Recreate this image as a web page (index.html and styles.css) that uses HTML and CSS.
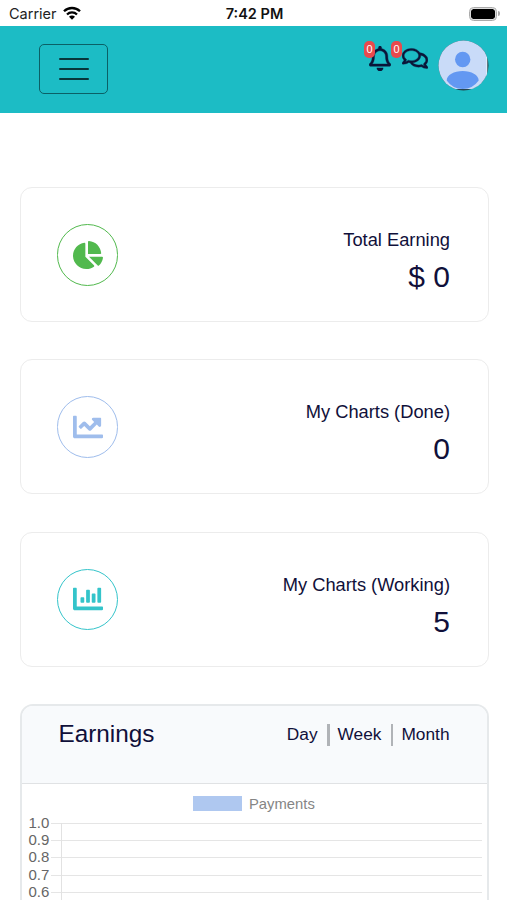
FILE: index.html
```
<!DOCTYPE html>
<html lang="en">
<head>
<meta charset="utf-8">
<title>Dashboard</title>
<link rel="stylesheet" href="styles.css">
</head>
<body>
<div class="status">
  <div class="carrier"><span>Carrier</span>
    <svg class="wifi" viewBox="0 0 18 14"><g fill="none" stroke="#000" stroke-width="2.3"><path d="M1 5.3a11.3 11.3 0 0 1 16 0"/><path d="M4 8.5a7.1 7.1 0 0 1 10 0"/></g><path d="M9 13.7l-3-3a4.2 4.2 0 0 1 6 0z"/></svg>
  </div>
  <time>7:42 PM</time>
  <div class="power"><span class="battery"></span><span class="cap"></span></div>
</div>
<header class="topbar">
  <button class="menu" aria-label="Menu"><span></span><span></span><span></span></button>
  <div class="actions">
    <div class="action bell"><b>0</b><svg viewBox="0 0 448 512"><path d="M439.39 362.29c-19.32-20.76-55.47-51.99-55.47-154.29 0-77.7-54.48-139.9-127.94-155.16V32c0-17.67-14.32-32-31.98-32s-31.98 14.33-31.98 32v20.84C118.56 68.1 64.08 130.3 64.08 208c0 102.3-36.15 133.53-55.47 154.29-6 6.45-8.66 14.16-8.61 21.71.11 16.4 12.98 32 32.1 32h383.8c19.12 0 32-15.6 32.1-32 .05-7.55-2.61-15.27-8.61-21.71zM67.53 368c21.22-27.97 44.42-74.33 44.53-159.42 0-.2-.06-.38-.06-.58 0-61.86 50.14-112 112-112s112 50.14 112 112c0 .2-.06.38-.06.58.11 85.1 23.31 131.46 44.53 159.42H67.53zM224 512c35.32 0 63.97-28.65 63.97-64H160.03c0 35.35 28.65 64 63.97 64z"/></svg></div>
    <div class="action chat"><b>0</b><svg viewBox="0 0 576 512"><path d="M532 386.2c27.5-27.1 44-61.1 44-98.2 0-80-76.5-146.1-176.2-157.9C368.3 72.5 294.3 32 208 32 93.1 32 0 103.6 0 192c0 37 16.5 71 44 98.2-15.3 30.7-37.3 54.5-37.7 54.9-6.3 6.7-8.1 16.5-4.4 25 3.6 8.5 12 14 21.2 14 53.5 0 96.7-20.2 125.2-38.8 9.2 2.1 18.7 3.7 28.4 4.9C208.1 407.6 281.8 448 368 448c20.8 0 40.8-2.4 59.8-6.8C456.3 459.7 499.4 480 553 480c9.2 0 17.5-5.5 21.2-14 3.6-8.5 1.9-18.3-4.4-25-.4-.3-22.5-24.1-37.8-54.8zm-392.8-92.3L122.1 305c-14.1 9.1-28.5 16.3-43.1 21.4 2.7-4.7 5.4-9.7 8-14.8l15.5-31.1L77.7 256C64.2 242.6 48 220.7 48 192c0-60.7 73.3-112 160-112s160 51.3 160 112-73.3 112-160 112c-16.5 0-33-1.9-49-5.6l-19.8-4.5zM498.3 352l-24.7 24.4 15.5 31.1c2.6 5.1 5.3 10.1 8 14.8-14.6-5.1-29-12.3-43.1-21.4l-17.1-11.1-19.9 4.6c-16 3.7-32.5 5.6-49 5.6-54 0-102.2-20.1-131.3-49.7C338 339.5 416 272.9 416 192c0-3.4-.4-6.7-.7-10C479.7 196.5 528 238.8 528 288c0 28.7-16.2 50.6-29.7 64z"/></svg></div>
    <svg class="avatar" viewBox="0 0 51 51"><defs><clipPath id="round"><circle cx="25.5" cy="25.5" r="25"/></clipPath></defs><g clip-path="url(#round)"><path fill="#27454f" d="M0 0h51v51H0z"/><path fill="#c9dbf8" d="M0 0h49v49H0z"/><path fill="#e9f3fb" d="M48.3 17h1v20q-4 8-15 12.500h-2q12-4 16-13z"/><circle cx="24.700" cy="19.500" r="7.700" fill="#6398f2"/><path fill="#6398f2" d="M8.700 40.500c0-5.500 7.300-9.500 16-9.500s16 4 16 9.500q-6 8.500-16 8.500t-16-8.500z"/></g></svg>
  </div>
</header>
<main>
  <section class="card green">
    <div class="ring"><svg viewBox="0 0 544 512"><path d="M527.79 288H290.5l158.03 158.03c6.04 6.04 15.98 6.53 22.19.68 38.7-36.46 65.32-85.61 73.13-140.86 1.34-9.46-6.51-17.85-16.06-17.85zm-15.83-64.8C503.72 103.74 408.26 8.28 288.8.04 279.68-.59 272 7.1 272 16.24V240h223.77c9.14 0 16.82-7.68 16.19-16.8zM224 288V50.71c0-9.55-8.39-17.4-17.84-16.06C86.99 51.49-4.1 155.6.14 280.37 4.5 408.51 114.83 513.59 243.03 511.98c50.4-.63 96.97-16.87 135.26-44.03 7.9-5.6 8.42-17.23 1.57-24.08L224 288z"/></svg></div>
    <div class="stat"><h2>Total Earning</h2><p>$ 0</p></div>
  </section>
  <section class="card blue">
    <div class="ring"><svg viewBox="0 0 512 512"><path d="M496 384H64V80c0-8.840-7.160-16-16-16H16C7.160 64 0 71.160 0 80v336c0 17.670 14.330 32 32 32h464c8.840 0 16-7.160 16-16v-32c0-8.840-7.160-16-16-16zM464 96H345.940c-21.380 0-32.090 25.850-16.970 40.970l32.400 32.400L288 242.750l-73.370-73.370c-12.500-12.500-32.760-12.500-45.250 0l-68.690 68.690c-6.250 6.250-6.250 16.380 0 22.630l22.620 22.620c6.250 6.250 16.380 6.250 22.630 0L192 237.250l73.370 73.370c12.500 12.500 32.760 12.500 45.250 0l96-96 32.400 32.400c15.120 15.120 40.970 4.410 40.970-16.970V112c.01-8.840-7.150-16-15.990-16z"/></svg></div>
    <div class="stat"><h2>My Charts (Done)</h2><p>0</p></div>
  </section>
  <section class="card teal">
    <div class="ring"><svg viewBox="0 0 512 512"><path d="M332.800 320h38.400c6.400 0 12.800-6.400 12.800-12.800V172.800c0-6.400-6.400-12.800-12.800-12.800h-38.400c-6.400 0-12.800 6.400-12.800 12.800v134.400c0 6.400 6.400 12.800 12.800 12.800zm96 0h38.400c6.400 0 12.800-6.400 12.800-12.800V76.800c0-6.400-6.400-12.800-12.800-12.800h-38.400c-6.400 0-12.800 6.400-12.800 12.800v230.400c0 6.400 6.400 12.800 12.800 12.800zm-288 0h38.400c6.400 0 12.800-6.400 12.800-12.800v-70.400c0-6.400-6.400-12.800-12.800-12.800h-38.400c-6.400 0-12.800 6.400-12.800 12.800v70.400c0 6.400 6.400 12.800 12.800 12.800zm96 0h38.400c6.400 0 12.800-6.400 12.800-12.800V108.800c0-6.400-6.400-12.800-12.800-12.800h-38.400c-6.400 0-12.800 6.400-12.800 12.800v198.400c0 6.400 6.400 12.800 12.800 12.800zM496 384H64V80c0-8.840-7.160-16-16-16H16C7.160 64 0 71.160 0 80v336c0 17.670 14.330 32 32 32h464c8.840 0 16-7.160 16-16v-32c0-8.840-7.160-16-16-16z"/></svg></div>
    <div class="stat"><h2>My Charts (Working)</h2><p>5</p></div>
  </section>
  <section class="earnings">
    <div class="earnings-head">
      <h1>Earnings</h1>
      <nav><a>Day</a><i></i><a>Week</a><i></i><a>Month</a></nav>
    </div>
    <div class="legend"><span class="swatch"></span><span>Payments</span></div>
    <div class="chart">
      <div class="ticks"><span>1.0</span><span>0.9</span><span>0.8</span><span>0.7</span><span>0.6</span></div>
      <div class="stubs"><i></i><i></i><i></i><i></i><i></i></div>
      <div class="plot"><i></i><i></i><i></i><i></i><i></i></div>
    </div>
  </section>
</main>
</body>
</html>
```
FILE: styles.css
```
* { box-sizing: border-box; }
body {
  margin: 0;
  height: 900px;
  overflow: hidden;
  background: #fff;
  color: #10103a;
  font-family: "Liberation Sans", Arial, sans-serif;
}
h1, h2, p { margin: 0; font-weight: 400; }

.status {
  display: grid;
  grid-template-columns: 1fr auto 1fr;
  align-items: center;
  height: 26px;
  padding: 1px 7px 0 9px;
  font-family: Inter, sans-serif;
  font-size: 14.500px;
  color: #222;
}
.status time { font-weight: 600; font-size: 14.500px; color: #111; }
.carrier { display: flex; align-items: center; gap: 6px; }
.wifi { width: 18px; height: 14px; margin-top: -2px; }
.power { display: flex; align-items: center; justify-content: flex-end; gap: 1px; }
.battery {
  width: 28px;
  height: 14px;
  border: 1px solid #aaa;
  border-radius: 4.500px;
  padding: 1px;
  background: #000 content-box;
  box-shadow: inset 0 0 0 1px #ddd;
}
.cap { width: 2px; height: 5px; border-radius: 0 2px 2px 0; background: #aaa; }

.topbar {
  display: flex;
  justify-content: space-between;
  align-items: flex-start;
  height: 87px;
  padding: 14px 18px 0 39px;
  background: #1cbcc5;
}
.menu {
  display: flex;
  flex-direction: column;
  align-items: center;
  justify-content: center;
  gap: 8px;
  width: 69px;
  height: 50px;
  margin-top: 4px;
  padding: 0;
  border: 1px solid #0b6066;
  border-radius: 5px;
  background: none;
}
.menu span { width: 30px; height: 2px; border-radius: 1px; background: #07363b; }
.actions { display: flex; align-items: flex-start; }
.action { position: relative; }
.action svg { display: block; fill: #0b1539; stroke: #0b1539; stroke-width: 8; }
.bell { width: 22px; margin: 6px 12px 0 0; }
.bell svg { width: 22px; height: 25px; }
.chat { width: 26px; margin: 7px 10px 0 0; }
.chat svg { width: 26px; height: 23px; }
.action b {
  position: absolute;
  z-index: 1;
  left: -4px;
  top: -5px;
  width: 11px;
  height: 17px;
  border-radius: 5px;
  background: #e84a4d;
  color: #fff;
  font: 11px/17px "Liberation Sans", sans-serif;
  text-align: center;
}
.chat b { left: -11px; top: -6px; }
.bell svg { margin-left: 1px; }
.avatar { width: 51px; height: 51px; }

main { height: 787px; overflow: hidden; padding: 74px 18.500px 0 19.500px; }
.card {
  display: flex;
  justify-content: space-between;
  height: 135px;
  margin-bottom: 37.300px;
  padding: 36px 37.500px 0 36px;
  border: 1.500px solid #ececec;
  border-radius: 12px;
}
.ring {
  display: flex;
  align-items: center;
  justify-content: center;
  width: 61.500px;
  height: 61.500px;
  border: 1.300px solid currentColor;
  border-radius: 50%;
}
.ring svg { width: 30px; height: 30px; margin-left: 2px; fill: currentColor; }
.green { color: #52b94e; }
.blue { color: #9fbdec; }
.teal { color: #34c4ca; }
.stat { padding-top: 5px; color: #10103a; text-align: right; }
.stat h2 { font-size: 18.300px; line-height: 22px; }
.stat p { font-size: 30px; line-height: 34px; margin-top: 9px; }

.earnings {
  height: 196px;
  border: 2px solid #e6e9eb;
  border-bottom: 0;
  border-radius: 13px 13px 0 0;
  overflow: hidden;
}
.earnings-head {
  display: flex;
  justify-content: space-between;
  height: 78px;
  padding: 11px 37px 0 37px;
  border-bottom: 1px solid #e0e2e4;
  background: #f8fafc;
}
.earnings h1 { font-size: 24.300px; line-height: 34px; }
nav { display: flex; align-items: center; height: 36px; font-size: 17.300px; }
nav i { width: 2.500px; height: 22px; margin: 0 8px 0 9.500px; background: #b0b3b7; }
.legend {
  display: flex;
  align-items: center;
  gap: 7px;
  height: 18px;
  margin: 11px 0 0 171.500px;
  color: #858585;
  font-size: 14.800px;
}
.swatch { width: 49px; height: 15px; background: #afc8f0; }
.chart { display: flex; margin-top: 1px; padding: 0 4.500px 0 7px; color: #666; font-size: 15px; }
.ticks { width: 22px; }
.ticks span { display: block; height: 17.300px; line-height: 18px; }
.stubs { width: 10.500px; padding-top: 9px; }
.plot { flex: 1; margin-top: 9px; border-left: 1.500px solid #e2e2e2; }
.stubs i, .plot i { display: block; height: 17.300px; border-top: 1px solid #e5e5e5; }
```
